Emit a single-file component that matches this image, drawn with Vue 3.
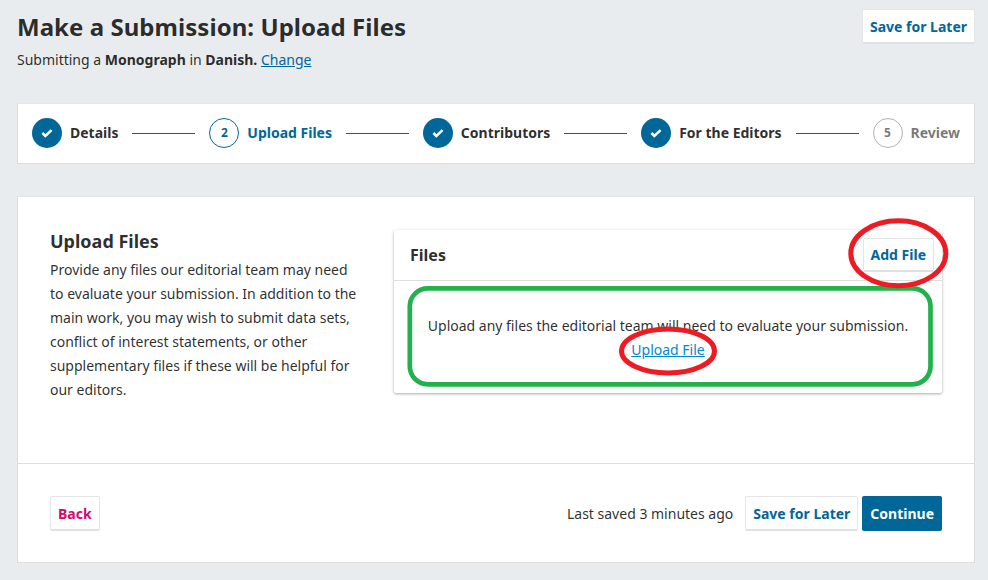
<script setup>
const steps = [
  { label: 'Details', state: 'done' },
  { label: 'Upload Files', state: 'current', n: 2 },
  { label: 'Contributors', state: 'done' },
  { label: 'For the Editors', state: 'done' },
  { label: 'Review', state: 'todo', n: 5 }
]
</script>

<template>
  <div class="page">
    <header class="head">
      <div>
        <h1>Make a Submission: Upload Files</h1>
        <p class="sub">Submitting a <b>Monograph</b> in <b>Danish.</b> <a href="#" class="change">Change</a></p>
      </div>
      <button class="btn">Save for Later</button>
    </header>

    <nav class="steps">
      <template v-for="(s, i) in steps" :key="s.label">
        <div class="step" :class="s.state">
          <span class="dot">
            <svg v-if="s.state === 'done'" viewBox="0 0 14 12" width="12" height="10"><path d="M1.500 6 L5 9.500 L12.500 2.500" fill="none" stroke="#fff" stroke-width="3"/></svg>
            <template v-else>{{ s.n }}</template>
          </span>
          <span class="label">{{ s.label }}</span>
        </div>
        <span v-if="i < steps.length - 1" class="line"></span>
      </template>
    </nav>

    <main class="card">
      <section class="body">
        <div class="intro">
          <h2>Upload Files</h2>
          <p>Provide any files our editorial team may need to evaluate your submission. In addition to the main work, you may wish to submit data sets, conflict of interest statements, or other supplementary files if these will be helpful for our editors.</p>
        </div>
        <div class="panel">
          <div class="panel-head">
            <h3>Files</h3>
            <button class="btn">Add File</button>
          </div>
          <div class="panel-body">
            Upload any files the editorial team will need to evaluate your submission.<br />
            <a href="#" class="upload">Upload File</a>
          </div>
        </div>
      </section>
      <footer class="foot">
        <button class="btn back">Back</button>
        <div class="foot-right">
          <span class="saved">Last saved 3 minutes ago</span>
          <button class="btn">Save for Later</button>
          <button class="btn primary">Continue</button>
        </div>
      </footer>
    </main>

    <svg class="marks" width="988" height="580" viewBox="0 0 988 580">
      <rect x="409.800" y="288.300" width="520.700" height="96" rx="18" fill="none" stroke="#22b14c" stroke-width="4.700"/>
      <ellipse cx="898.300" cy="253.300" rx="47.500" ry="32.500" fill="none" stroke="#ed1c24" stroke-width="5"/>
      <ellipse cx="668" cy="351" rx="46.500" ry="22" fill="none" stroke="#ed1c24" stroke-width="5"/>
    </svg>
  </div>
</template>

<style>
html, body { margin: 0; background: #e9ecee; }
</style>

<style scoped>
.page {
  position: relative;
  width: 988px;
  height: 580px;
  overflow: hidden;
  box-sizing: border-box;
  padding: 9px 13px 0 17px;
  background: #e9ecee;
  color: rgba(0, 0, 0, 0.84);
  font: 14px/20px "Noto Sans", sans-serif;
}
.head { display: flex; justify-content: space-between; align-items: flex-start; height: 94px; }
h1 { margin: 2px 0 0; font-size: 24px; line-height: 32px; font-weight: 700; letter-spacing: 0.05px; }
.sub { margin: 7px 0 0; line-height: 20px; }
a { color: #006798; }
.btn {
  box-sizing: border-box;
  height: 35px;
  padding: 1px 7px 0;
  background: #fff;
  border: 1px solid rgba(0, 0, 0, 0.1);
  border-bottom: 2px solid rgba(0, 0, 0, 0.12);
  border-radius: 2px;
  color: #006798;
  font: 700 14px/20px "Noto Sans", sans-serif;
  white-space: nowrap;
}
.panel-head .btn { height: 34px; }
.primary { background: #006798; border-color: #006798; color: #fff; }
.back { color: #d00a6c; }
.steps {
  box-sizing: border-box;
  display: flex;
  align-items: center;
  gap: 14px;
  height: 61px;
  padding: 0 14px 1px;
  background: #fff;
  border: 1px solid #ddd;
  border-top-color: #e4e6e8;
  font-weight: 700;
}
.step { display: flex; align-items: center; gap: 8px; white-space: nowrap; }
.dot {
  box-sizing: border-box;
  display: flex;
  align-items: center;
  justify-content: center;
  width: 30px;
  height: 30px;
  border-radius: 50%;
  font-size: 12px;
}
.done .dot { background: #006798; }
.current .dot { border: 1px solid #006798; color: #006798; }
.current .label { color: #006798; }
.todo .dot { border: 1px solid rgba(0, 0, 0, 0.3); color: rgba(0, 0, 0, 0.54); }
.todo .label { color: rgba(0, 0, 0, 0.54); }
.line { flex: 1; height: 1px; background: #006798; }
.card {
  box-sizing: border-box;
  display: flex;
  flex-direction: column;
  height: 367px;
  margin-top: 32px;
  background: #fff;
  border: 1px solid #ddd;
  border-top-color: #e4e6e8;
}
.body {
  display: flex;
  justify-content: space-between;
  height: 267px;
  box-sizing: border-box;
  padding: 33px 32px 0;
  border-bottom: 1px solid #ddd;
}
.intro { width: 310px; }
h2 { margin: -1px 0 0; font-size: 18px; line-height: 24px; font-weight: 700; }
.intro p { margin: 5px 0 0; line-height: 24px; }
.panel {
  box-sizing: border-box;
  width: 548px;
  height: 163px;
  border-radius: 2px;
  box-shadow: 0 1px 3px rgba(0, 0, 0, 0.34);
}
.panel-head {
  box-sizing: border-box;
  display: flex;
  justify-content: space-between;
  align-items: center;
  height: 51px;
  padding: 0 8px 0 16px;
  border-bottom: 1px solid #ddd;
}
h3 { margin: 0; font-size: 16px; line-height: 24px; font-weight: 700; }
.panel-body { padding: 33px 0 0; text-align: center; line-height: 24px; }
.upload { color: #008acb; }
.foot {
  flex: 1;
  display: flex;
  justify-content: space-between;
  align-items: flex-start;
  padding: 32px 32px 0;
}
.foot-right { display: flex; align-items: center; gap: 4px; }
.saved { margin-right: 8px; }
.marks { position: absolute; left: 0; top: 0; pointer-events: none; }
</style>
